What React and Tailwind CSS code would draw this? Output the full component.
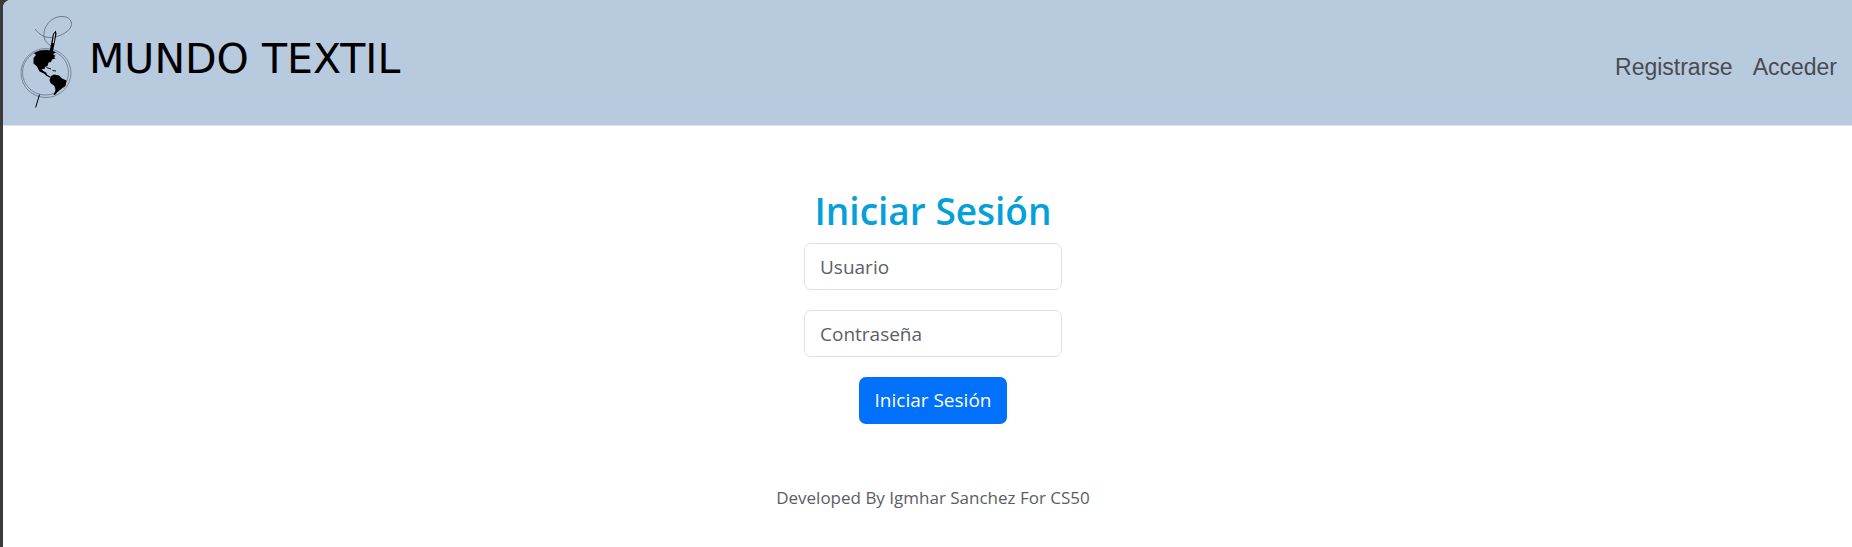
function Logo() {
  return (
    <svg viewBox="0 0 60 100" className="h-[100px] w-[60px] shrink-0" aria-hidden="true">
      <g fill="none" stroke="#4f5a69">
        <ellipse cx="28" cy="60" rx="25" ry="24.500" strokeWidth="0.6" />
        <ellipse cx="27.5" cy="59.5" rx="23" ry="22.500" strokeWidth="0.6" />
        <path
          d="M17 16C21 21 26 25 33 24.500C42 24 53 18 53.500 11.500C54 4 45 2 38 4.500C29 8 25 17 26 24C26.500 28 30 31 33 33"
          strokeWidth="0.7"
        />
      </g>
      <path d="M37.800 17.500L35 21L31.500 39H34.800L38.500 21Z" fill="#000" />
      <path d="M36.700 20.500L35.200 30" stroke="#b8cade" strokeWidth="1.200" />
      <path d="M21.500 81.500L20.200 86L17.600 94.500" fill="none" stroke="#000" strokeWidth="1" />
      <path
        d="M16 40L22 37.500L29 37L35 38L38 39.500L35 41L37.500 43L36 44L37.500 45.500L34 46.500L33 49L30.500 49.500L29.500 53L27 54L26.500 56L23.500 56L25.500 58L28 59.500L29.500 62L33 64L31.500 64.500L28 62.500L26 60.500L21.500 58.500L19 53.500L15.500 50.500L15.500 45L18 42Z"
        fill="#000"
      />
      <path d="M28.500 54.500L33 56M34.500 57.500L38 58" stroke="#000" strokeWidth="0.900" />
      <path
        d="M33 63L36 61.500L41 62.500L44 65.500L48.500 67.500L47.500 73L43 76L39.500 79L37 82L35.500 82L37.500 77L36.500 73L32.500 70L31.500 67Z"
        fill="#000"
      />
    </svg>
  );
}

const inputStyle =
  "h-[47px] w-full rounded-[7px] border border-[#dee2e6] bg-white px-[15px] text-[19px] text-[#212529] placeholder:text-[#5b6066] placeholder:opacity-100";

export default function App() {
  return (
    <div className="min-h-screen bg-[#3a3a3a] pl-[3px] font-['Open_Sans','Noto_Sans',sans-serif]">
      <div className="min-h-screen overflow-hidden rounded-tl-[8px] bg-white">
        <header className="flex h-[126px] items-center justify-between border-b border-[#dce4ee] bg-[#b8cade] pr-[15px] pl-[15px]">
          <a href="#" className="flex items-center gap-[11px] text-black">
            <Logo />
            <span className="pb-[6px] font-['DejaVu_Sans',Verdana,sans-serif] text-[41px] leading-none">
              MUNDO TEXTIL
            </span>
          </a>
          <nav className="flex gap-5 pt-[10px] font-['Liberation_Sans',Arial,sans-serif] text-[23px] text-[#474c52]">
            <a href="#registrarse">Registrarse</a>
            <a href="#acceder">Acceder</a>
          </nav>
        </header>
        <main className="flex flex-col items-center pt-[60px] pl-[11px]">
          <h1 className="mb-[7px] text-[37px] leading-[50px] font-semibold text-[#059fd9]">Iniciar Sesión</h1>
          <form className="flex w-[258px] flex-col items-center gap-5">
            <input type="text" placeholder="Usuario" aria-label="Usuario" className={inputStyle} />
            <input type="password" placeholder="Contraseña" aria-label="Contraseña" className={inputStyle} />
            <button type="button" className="h-[47px] rounded-[7px] bg-[#0170fb] px-4 text-[19px] text-white">
              Iniciar Sesión
            </button>
          </form>
        </main>
        <footer className="pt-[60px] pl-[11px] text-center text-[17px] leading-7 text-[#595e63]">
          Developed By Igmhar Sanchez For CS50
        </footer>
      </div>
    </div>
  );
}
